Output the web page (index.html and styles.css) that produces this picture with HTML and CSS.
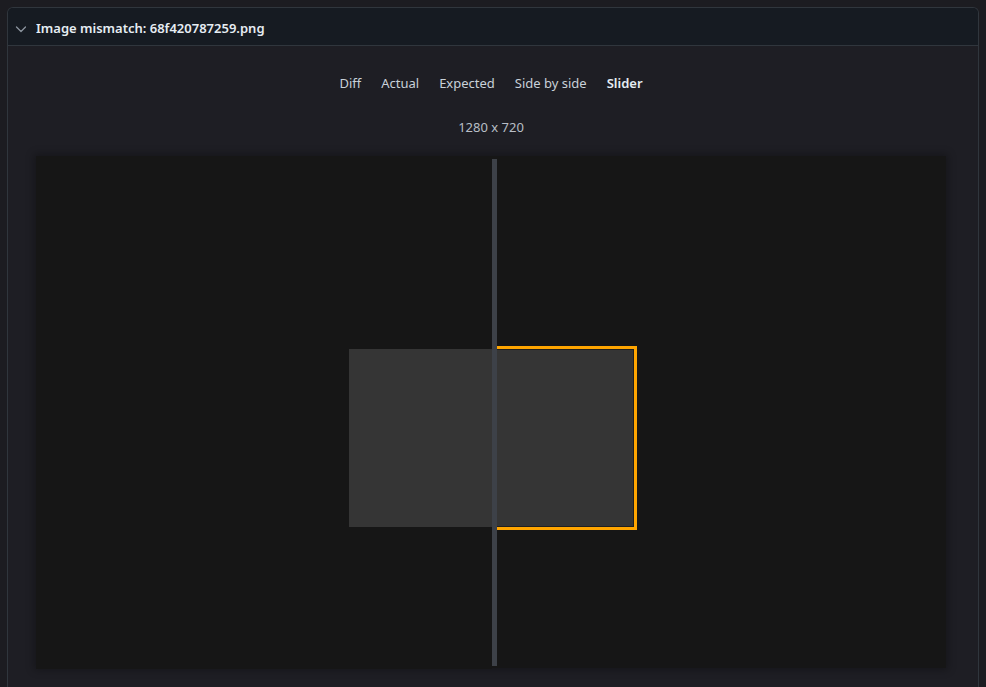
FILE: index.html
```html
<!DOCTYPE html>
<html>
<head>
<meta charset="utf-8">
<link rel="stylesheet" href="styles.css">
</head>
<body>
<div class="card">
  <div class="card-header">
    <svg class="chevron" width="16" height="16" viewBox="0 0 16 16"><path d="M3.5 6 L8 10.5 L12.5 6" fill="none" stroke="#8b949e" stroke-width="1.3" stroke-linecap="round" stroke-linejoin="round"/></svg>
    <span class="title">Image mismatch: 68f420787259.png</span>
  </div>
  <div class="card-body">
    <div class="tabs">
      <span class="tab">Diff</span>
      <span class="tab">Actual</span>
      <span class="tab">Expected</span>
      <span class="tab">Side by side</span>
      <span class="tab active">Slider</span>
    </div>
    <div class="dims">1280 x 720</div>
    <div class="viewer">
      <div class="pane-left">
        <div class="box-expected"></div>
      </div>
      <div class="box-actual"></div>
      <div class="handle"></div>
    </div>
  </div>
</div>
</body>
</html>
```
FILE: styles.css
```css
html, body {
  margin: 0;
  padding: 0;
  background: #1c1c21;
  font-family: "Noto Sans", "Open Sans", sans-serif;
}
.card {
  margin: 7px 7px 0 7px;
  border: 1px solid #30363d;
  border-bottom: none;
  border-radius: 6px 6px 0 0;
  background: #1e1e24;
  height: 700px;
  overflow: hidden;
}
.card-header {
  height: 38px;
  box-sizing: border-box;
  background: #161b22;
  border-bottom: 1px solid #30363d;
  display: flex;
  align-items: center;
  padding-left: 5px;
  padding-top: 2px;
}
.chevron {
  width: 16px;
  height: 16px;
  margin-right: 7px;
  margin-top: 2px;
}
.title {
  color: #e6edf3;
  font-size: 13px;
  font-weight: 600;
}
.card-body {
  padding: 0 32px 0 28px;
  display: flex;
  flex-direction: column;
  align-items: center;
}
.tabs {
  margin-top: 27px;
  display: flex;
  gap: 20px;
  font-size: 13px;
  line-height: 20px;
  color: #c9d1d9;
}
.tab.active {
  font-weight: 600;
  color: #e6edf3;
}
.dims {
  margin-top: 24px;
  font-size: 13px;
  line-height: 20px;
  color: #b8bec6;
}
.viewer {
  margin-top: 19px;
  position: relative;
  width: 910px;
  height: 512px;
  background: #161616;
  box-shadow: 0 0 8px 2px rgba(0, 0, 0, 0.3);
}
.pane-left {
  position: absolute;
  left: 0;
  top: 0;
  width: 456px;
  height: 513px;
  background: #161616;
  overflow: hidden;
  z-index: 1;
}
.box-expected {
  position: absolute;
  left: 313px;
  top: 193px;
  width: 160px;
  height: 178px;
  background: #353535;
}
.box-actual {
  position: absolute;
  left: 430px;
  top: 190px;
  width: 171px;
  height: 184px;
  box-sizing: border-box;
  border: 3px solid #ffa500;
  box-shadow: inset 0 0 0 1px #1f1f1f;
  background: #353535;
}
.handle {
  position: absolute;
  left: 456px;
  top: 3px;
  width: 5px;
  bottom: 2px;
  background: #3d4148;
  z-index: 2;
}
```
